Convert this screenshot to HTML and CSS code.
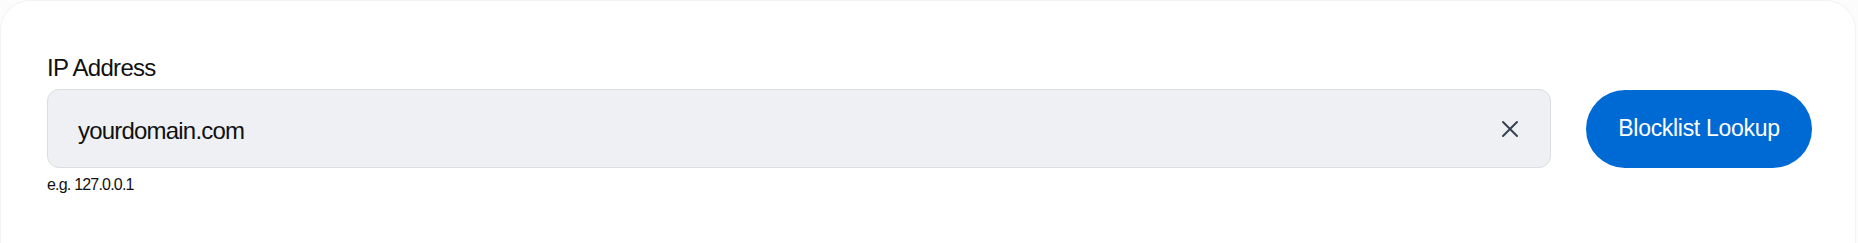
FILE: index.html
```html
<!DOCTYPE html>
<html lang="en">
<head>
    <meta charset="UTF-8">
    <meta name="viewport" content="width=device-width, initial-scale=1.0">
    <title>Blocklist Lookup</title>
    <link rel="stylesheet" href="styles.css">
</head>
<body>
    <div class="card">
        <label class="field-label" for="ipInput">IP Address</label>

        <!-- input + lookup button -->
        <div class="lookup-row">
            <div class="input-wrap">
                <input id="ipInput" class="ip-input" type="text" value="yourdomain.com">
                <button class="clear-btn" type="button" aria-label="Clear">
                    <svg width="18" height="18" viewBox="0 0 18 18" fill="none" stroke="#374151" stroke-width="2" stroke-linecap="round">
                        <path d="M2 2 L16 16 M16 2 L2 16"/>
                    </svg>
                </button>
            </div>
            <button class="lookup-btn" type="button">Blocklist Lookup</button>
        </div>

        <div class="hint">e.g. 127.0.0.1</div>
    </div>
</body>
</html>
```

FILE: styles.css
```css
* {
    box-sizing: border-box;
}
body {
    margin: 0;
    background-color: #fcfcfc;
    font-family: 'Liberation Sans', Arial, sans-serif;
    color: #111;
}
.card {
    width: 1856px;
    height: 243px;
    background-color: #fff;
    border: 1px solid #f3f3f3;
    border-bottom: none;
    border-radius: 30px 30px 0 0;
    padding: 52px 43px 0 46px;
}
.field-label {
    display: block;
    font-size: 24px;
    line-height: 30px;
    letter-spacing: -0.7px;
    color: #111;
    margin-bottom: 6px;
}
.lookup-row {
    display: flex;
    align-items: center;
    gap: 35px;
}
.input-wrap {
    flex: 1;
    display: flex;
    align-items: center;
    height: 79px;
    background-color: #eef0f4;
    border: 1px solid #dcdde0;
    border-radius: 12px;
    padding: 0 28px 0 30px;
}
.ip-input {
    flex: 1;
    border: none;
    outline: none;
    background: transparent;
    padding: 0;
    font-family: 'Liberation Sans', Arial, sans-serif;
    font-size: 24px;
    letter-spacing: -0.8px;
    color: #111;
    margin-top: 4px;
}
.clear-btn {
    width: 24px;
    height: 24px;
    border: none;
    background: none;
    padding: 0;
    display: flex;
    align-items: center;
    justify-content: center;
    cursor: pointer;
}
.lookup-btn {
    width: 226px;
    height: 78px;
    border: none;
    border-radius: 39px;
    background-color: #006ad4;
    color: #fff;
    font-family: 'Liberation Sans', Arial, sans-serif;
    font-size: 23px;
    letter-spacing: -0.3px;
    cursor: pointer;
    padding: 0;
}
.lookup-btn:hover {
    background-color: #0a5fb8;
}
.hint {
    font-size: 16px;
    line-height: 20px;
    letter-spacing: -0.8px;
    margin-top: 7px;
    color: #111;
}
```
